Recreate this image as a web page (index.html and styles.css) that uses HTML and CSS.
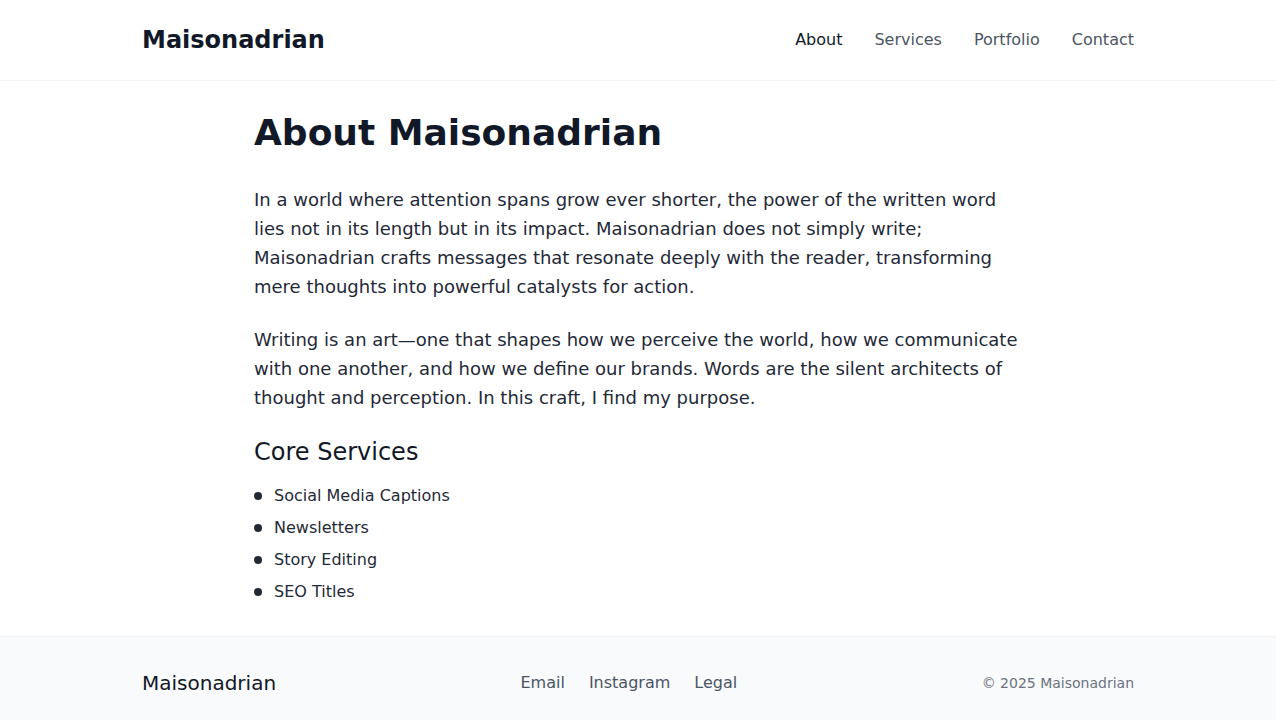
FILE: index.html
```html
<!DOCTYPE html>
<html lang="en">
<head>
<meta charset="utf-8">
<title>About Maisonadrian</title>
<link rel="stylesheet" href="styles.css">
</head>
<body>
<header class="site-header">
  <div class="container header-inner">
    <a class="logo" href="#">Maisonadrian</a>
    <nav class="nav">
      <a class="nav-link active" href="#">About</a>
      <a class="nav-link" href="#">Services</a>
      <a class="nav-link" href="#">Portfolio</a>
      <a class="nav-link" href="#">Contact</a>
    </nav>
  </div>
</header>
<main class="main">
  <article class="content">
    <h1 class="title">About Maisonadrian</h1>
    <p class="para">In a world where attention spans grow ever shorter, the power of the written word lies not in its length but in its impact. Maisonadrian does not simply write; Maisonadrian crafts messages that resonate deeply with the reader, transforming mere thoughts into powerful catalysts for action.</p>
    <p class="para">Writing is an art—one that shapes how we perceive the world, how we communicate with one another, and how we define our brands. Words are the silent architects of thought and perception. In this craft, I find my purpose.</p>
    <h2 class="subtitle">Core Services</h2>
    <ul class="services">
      <li class="service">Social Media Captions</li>
      <li class="service">Newsletters</li>
      <li class="service">Story Editing</li>
      <li class="service">SEO Titles</li>
    </ul>
  </article>
</main>
<footer class="site-footer">
  <div class="container footer-inner">
    <div class="footer-logo">Maisonadrian</div>
    <nav class="footer-nav">
      <a class="footer-link" href="#">Email</a>
      <a class="footer-link" href="#">Instagram</a>
      <a class="footer-link" href="#">Legal</a>
    </nav>
    <div class="copyright">© 2025 Maisonadrian</div>
  </div>
</footer>
</body>
</html>
```

FILE: styles.css
```css
* { box-sizing: border-box; }
html, body { margin: 0; padding: 0; }
body {
  margin-right: 4px;
  font-family: "DejaVu Sans", sans-serif;
  color: #111827;
  background: #ffffff;
}
a { text-decoration: none; color: inherit; }

.container {
  max-width: 992px;
  margin: 0 auto;
}

.site-header {
  border-bottom: 1px solid #f3f4f6;
}
.header-inner {
  height: 80px;
  display: flex;
  align-items: center;
  justify-content: space-between;
}
.logo {
  font-size: 24px;
  font-weight: 700;
  color: #111827;
  line-height: 32px;
}
.nav {
  display: flex;
  gap: 32px;
}
.nav-link {
  font-size: 16px;
  line-height: 24px;
  color: #4b5563;
}
.nav-link.active { color: #111827; }

.main {
  padding: 32px 0;
}
.content {
  max-width: 768px;
  margin: 0 auto;
}
.title {
  font-size: 36px;
  line-height: 40px;
  font-weight: 700;
  margin: 0 0 32px;
  color: #111827;
}
.para {
  font-size: 18px;
  line-height: 29px;
  margin: 0 0 24px;
  color: #1f2937;
}
.subtitle {
  font-size: 24px;
  line-height: 32px;
  font-weight: 400;
  margin: 24px 0 16px;
  color: #111827;
}
.services {
  list-style: none;
  margin: 0;
  padding: 0;
  display: flex;
  flex-direction: column;
  gap: 8px;
}
.service {
  display: flex;
  align-items: center;
  gap: 12px;
  font-size: 16px;
  line-height: 24px;
  color: #1f2937;
}
.service::before {
  content: "";
  width: 8px;
  height: 8px;
  border-radius: 50%;
  background: #1f2937;
  flex: none;
}

.site-footer {
  background: #f9fafb;
  border-top: 1px solid #f3f4f6;
}
.footer-inner {
  padding: 32px 0;
  display: flex;
  align-items: center;
  justify-content: space-between;
}
.footer-logo {
  font-size: 20px;
  line-height: 28px;
  color: #111827;
}
.footer-nav {
  display: flex;
  gap: 24px;
}
.footer-link {
  font-size: 16px;
  line-height: 24px;
  color: #4b5563;
}
.copyright {
  font-size: 14px;
  line-height: 20px;
  color: #6b7280;
}
```
